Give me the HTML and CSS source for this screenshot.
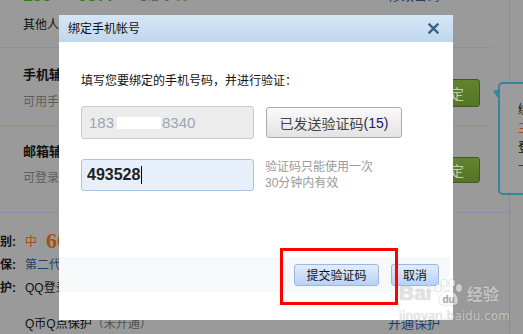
FILE: index.html
```html
<!DOCTYPE html>
<html>
<head>
<meta charset="utf-8">
<link rel="stylesheet" href="styles.css">
</head>
<body>
<div class="page">
  <div class="sec sec-top">
    <div class="r1"><span class="acct">155****0877</span><span class="acct-note">（电话/手机）</span><span class="r1-link">修改密码</span></div>
    <div class="r2">其他人可以通过手机号码找到你</div>
  </div>
  <div class="sec sec-phone">
    <div class="item-text">
      <div class="item-title">手机辅助帐号</div>
      <div class="item-desc">可用手机号码登录QQ</div>
    </div>
    <span class="gbtn">绑定</span>
  </div>
  <div class="sec sec-mail">
    <div class="item-text">
      <div class="item-title">邮箱辅助帐号</div>
      <div class="item-desc">可登录QQ和找回密码</div>
    </div>
    <span class="gbtn gbtn-b">绑定</span>
  </div>
  <div class="sec sec-info">
    <div class="row"><span class="lab">级别:</span><span class="val"><span class="lvl">中</span><span class="score">60</span></span></div>
    <div class="row"><span class="lab">密保:</span><span class="val navy">第二代密保</span></div>
    <div class="row"><span class="lab">保护:</span><span class="val">QQ登录保护</span></div>
    <div class="row row-last"><span class="lab"></span><span class="val">Q币Q点保护 <span class="muted">（未开通）</span></span><span class="open navy">开通保护</span></div>
  </div>
</div>
<div class="side"></div>

<div class="tip">
  <div class="tip-line">绑定</div>
  <div class="tip-line orange">三</div>
  <div class="tip-line">登录</div>
  <div class="tip-line navy">一</div>
</div>

<div class="dlg">
  <div class="dlg-head">
    <span class="dlg-title">绑定手机帐号</span>
    <svg class="dlg-close" width="11" height="11" viewBox="0 0 11 11"><path d="M1.5 1.5 L9.5 9.5 M9.5 1.5 L1.5 9.5" stroke="#3b6182" stroke-width="2.4" stroke-linecap="square" fill="none"/></svg>
  </div>
  <div class="dlg-body">
    <p class="intro">填写您要绑定的手机号码，并进行验证：</p>
    <div class="frow">
      <div class="inp inp-phone">183<span class="mask"></span>8340</div>
      <div class="sendbtn">已发送验证码<span class="cnt">(15)</span></div>
    </div>
    <div class="frow frow-code">
      <div class="inp inp-code">493528<span class="caret"></span></div>
      <div class="hint">验证码只能使用一次<br>30分钟内有效</div>
    </div>
  </div>
  <div class="dlg-foot">
    <span class="bbtn bbtn-submit">提交验证码</span>
    <span class="bbtn bbtn-cancel">取消</span>
  </div>
</div>

<div class="annot"></div>

<div class="mark">
  <div class="mark-top">
    <span class="mark-bai">Bai</span>
    <svg class="mark-paw" width="32" height="28" viewBox="0 0 32 28">
      <ellipse cx="5" cy="9" rx="3.2" ry="4" />
      <ellipse cx="11" cy="4" rx="3.2" ry="4" />
      <ellipse cx="19" cy="4" rx="3.2" ry="4" />
      <ellipse cx="26" cy="9" rx="3.2" ry="4" />
      <path d="M6 22 C6 15 11 12 15.5 12 C20 12 25 15 25 22 C25 26 21 27 15.5 26 C10 27 6 26 6 22 Z" />
      <text x="15.5" y="24" text-anchor="middle">du</text>
    </svg>
    <span class="mark-jy">经验</span>
  </div>
  <div class="mark-url">jingyan.baidu.com</div>
</div>
</body>
</html>
```

FILE: styles.css
```css
html, body {
  margin: 0;
  padding: 0;
}
body {
  width: 523px;
  height: 334px;
  overflow: hidden;
  background: #9a9a9a;
  display: flex;
  position: relative;
  font-family: "Liberation Sans", "Noto Sans CJK SC", sans-serif;
  font-size: 12px;
  color: #111;
}
.page {
  width: 509px;
  border-right: 1px solid #7f8da4;
  flex: none;
}
.side {
  flex: 1;
}
.navy { color: #1d3f6b; }
.orange { color: #b0480c; }
.muted { color: #505050; }

.sec {
  box-sizing: border-box;
  border-bottom: 1px solid #8593aa;
}
.sec-top {
  width: 492px;
  padding: 0 0 12px 23px;
}
.r1 {
  margin-top: -12px;
  height: 16px;
  line-height: 14px;
  display: flex;
  align-items: center;
}
.acct {
  color: #2e7d12;
  font-weight: bold;
  font-size: 17px;
  width: 100px;
}
.acct-note {
  color: #5c5c5c;
  margin-left: 0;
}
.r1-link {
  margin-left: auto;
  margin-right: 52px;
  color: #1d3f6b;
  font-size: 13px;
}
.r2 {
  margin-top: 11px;
  line-height: 20px;
  height: 20px;
  font-size: 12px;
  white-space: nowrap;
}

.sec-phone, .sec-mail {
  display: flex;
  align-items: flex-start;
  justify-content: space-between;
}
.sec-phone {
  width: 490px;
  padding: 17px 10px 13px 23px;
}
.sec-mail {
  width: 509px;
  padding: 16px 29px 24px 23px;
}
.item-title {
  font-weight: bold;
  font-size: 13px;
  line-height: 20px;
}
.item-desc {
  margin-top: 7px;
  color: #5e5e5e;
  line-height: 20px;
}
.sec-mail .item-desc { margin-top: 6px; }
.gbtn {
  margin-top: 14px;
  width: 60px;
  height: 28px;
  box-sizing: border-box;
  border: 1px solid #3f5b1f;
  border-radius: 3px;
  background: linear-gradient(#628431, #557526);
  color: #c4ccb6;
  font-size: 14px;
  display: flex;
  align-items: center;
  justify-content: center;
}
.gbtn-b {
  margin-top: 15px;
  height: 26px;
}

.sec-info {
  border-bottom: none;
  padding-top: 16px;
}
.row {
  display: flex;
  align-items: center;
  height: 23px;
  white-space: nowrap;
}
.row-last {
  margin-top: 13px;
}
.lab {
  width: 16px;
  display: flex;
  justify-content: flex-end;
  font-weight: bold;
  flex: none;
}
.val {
  margin-left: 9px;
  display: flex;
  align-items: center;
}
.lvl {
  color: #b0480c;
}
.score {
  margin-left: 9px;
  font-family: "Liberation Serif", serif;
  font-weight: bold;
  font-size: 22px;
  color: #a5500e;
}
.open {
  margin-left: auto;
  margin-right: 69px;
  font-size: 13px;
}

.tip {
  position: absolute;
  left: 498px;
  top: 82px;
  width: 40px;
  height: 113px;
  box-sizing: border-box;
  border: 2px solid #2f87a2;
  border-radius: 5px;
  background: #9c9c9c;
  padding: 17px 0 0 18px;
}
.tip::before {
  content: "";
  position: absolute;
  left: -7px;
  top: 5px;
  width: 0;
  height: 0;
  border-top: 2px solid transparent;
  border-bottom: 10px solid transparent;
  border-right: 7px solid #2f87a2;
}
.tip-line {
  line-height: 19px;
  font-size: 12px;
  white-space: nowrap;
}

.dlg {
  position: absolute;
  left: 59px;
  top: 15px;
  width: 394px;
  height: 305px;
  background: #fff;
  display: flex;
  flex-direction: column;
}
.dlg-head {
  height: 27px;
  flex: none;
  background: linear-gradient(#d5e6f5, #c0d7ee);
  display: flex;
  align-items: center;
  justify-content: space-between;
  padding: 0 14px 0 9px;
}
.dlg-title {
  font-size: 12px;
  color: #111;
  line-height: 16px;
}
.dlg-close {
  display: block;
}
.dlg-body {
  height: 215px;
  flex: none;
  box-sizing: border-box;
  padding: 31px 0 0 22px;
}
.intro {
  margin: 0;
  line-height: 16px;
  font-size: 12px;
  color: #111;
}
.frow {
  display: flex;
  align-items: center;
  margin-top: 17px;
}
.frow-code {
  margin-top: 20px;
  align-items: flex-start;
}
.inp {
  width: 173px;
  box-sizing: border-box;
  border-radius: 3px;
  display: flex;
  align-items: center;
  flex: none;
}
.inp-phone {
  height: 33px;
  border: 1px solid #c9cacc;
  background: #ececed;
  color: #9aa6b6;
  font-size: 15px;
  padding-left: 7px;
}
.mask {
  display: inline-block;
  width: 44px;
  height: 12px;
  background: #fff;
  margin: 0 1px 0 3px;
}
.sendbtn {
  margin-left: 12px;
  width: 136px;
  height: 31px;
  box-sizing: border-box;
  border: 1px solid #ababab;
  border-radius: 3px;
  background: linear-gradient(#fafafa, #e3e3e3);
  color: #444;
  font-size: 14px;
  display: flex;
  align-items: center;
  justify-content: center;
}
.cnt {
  color: #1a1a5e;
}
.inp-code {
  height: 32px;
  border: 1px solid #a9c3e2;
  background: #e7f0fa;
  color: #222;
  font-weight: bold;
  font-size: 16px;
  padding-left: 5px;
}
.caret {
  display: inline-block;
  width: 1px;
  height: 18px;
  background: #000;
  margin-left: 1px;
}
.hint {
  margin-left: 11px;
  font-size: 12px;
  line-height: 16px;
  color: #9a9a9a;
}
.dlg-foot {
  height: 35px;
  flex: none;
  margin-right: 3px;
  background: #f6f8fa;
  display: flex;
  align-items: center;
  justify-content: flex-end;
  gap: 12px;
  padding-right: 11px;
}
.bbtn {
  height: 22px;
  box-sizing: border-box;
  border: 1px solid #9db8de;
  border-radius: 3px;
  background: linear-gradient(#e1edfc, #b7d1f4);
  color: #111;
  font-size: 12px;
  display: flex;
  align-items: center;
  justify-content: center;
}
.bbtn-submit { width: 85px; }
.bbtn-cancel { width: 48px; }

.annot {
  position: absolute;
  left: 280px;
  top: 248px;
  width: 118px;
  height: 57px;
  box-sizing: border-box;
  border: 3px solid #ff0000;
}

.mark {
  position: absolute;
  left: 399px;
  top: 279px;
  color: rgba(255, 255, 255, 0.6);
  text-shadow: 0 0 1px rgba(0, 0, 0, 0.3);
}
.mark-top {
  display: flex;
  align-items: center;
  height: 28px;
}
.mark-bai {
  font-family: "Liberation Sans", sans-serif;
  font-weight: bold;
  font-size: 21px;
}
.mark-paw {
  display: block;
  margin-left: 1px;
}
.mark-paw ellipse, .mark-paw path {
  fill: rgba(255, 255, 255, 0.55);
  stroke: rgba(0, 0, 0, 0.12);
  stroke-width: 0.8;
}
.mark-paw text {
  font-family: "Liberation Sans", sans-serif;
  font-weight: bold;
  font-size: 10px;
  fill: rgba(150, 150, 150, 0.7);
}
.mark-jy {
  margin-left: 2px;
  font-size: 16px;
  font-weight: bold;
}
.mark-url {
  margin-top: 2px;
  font-family: "DejaVu Sans", sans-serif;
  font-size: 12px;
  line-height: 14px;
}
```
